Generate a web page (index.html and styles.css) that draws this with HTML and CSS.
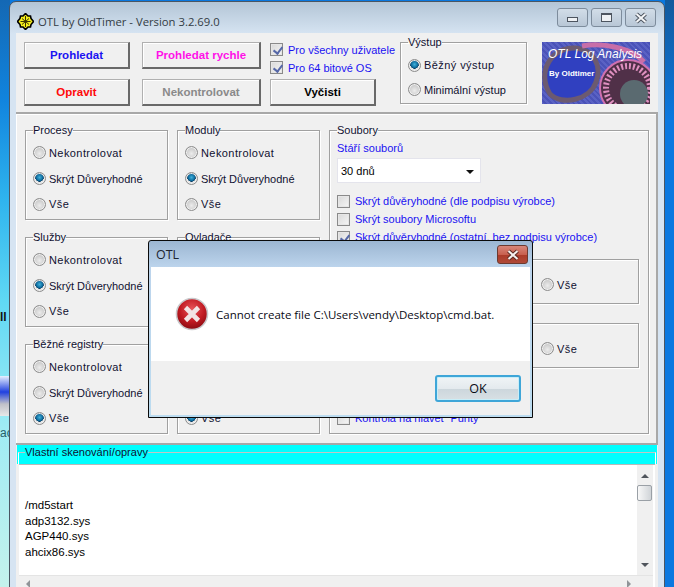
FILE: index.html
```html
<!DOCTYPE html>
<html lang="cs">
<head>
<meta charset="utf-8">
<title>OTL by OldTimer</title>
<link rel="stylesheet" href="styles.css">
</head>
<body>
<div class="desktop">
  <div class="strip-left"></div>
  <div class="strip-right"></div>
  <span class="dt-text dt-text-a">ll</span>
  <div class="dt-icon"></div>
  <span class="dt-text dt-text-b">ac</span>

  <section class="window">
    <header class="titlebar">
      <svg class="app-icon" width="17" height="17" viewBox="0 0 17 17"><path d="M8.5 0.5 L11 3 L13.5 3 L14 5.5 L16.5 8.5 L14 11.5 L13.5 14 L11 14 L8.5 16.5 L6 14 L3.5 14 L3 11.5 L0.5 8.5 L3 5.5 L3.5 3 L6 3 Z" fill="#f4ee1c" stroke="#000" stroke-width="1.6"/><path d="M8.5 3 V14 M3.5 8.5 H13.5 M5 5.5 L12 11.5 M12 5.5 L5 11.5" stroke="#3a3500" stroke-width="1" fill="none"/></svg>
      <span class="title-text">OTL by OldTimer - Version 3.2.69.0</span>
      <div class="caption-btns">
        <span class="cap-btn"><i class="glyph-min"></i></span>
        <span class="cap-btn"><i class="glyph-max"></i></span>
        <span class="cap-btn"><svg width="16" height="12" viewBox="0 0 16 12"><path d="M3.5 2 L12.5 10 M12.5 2 L3.5 10" stroke="#4d5560" stroke-width="4"/><path d="M3.5 2 L12.5 10 M12.5 2 L3.5 10" stroke="#f4f6f8" stroke-width="2"/></svg></span>
      </div>
    </header>

    <div class="client">
      <div class="toolbar">
        <button class="btn btn-narrow c-blue">Prohledat</button>
        <button class="btn btn-wide c-magenta">Prohledat rychle</button>
        <div class="top-checks">
          <label class="check-row"><span class="check on"></span><span class="c-blue">Pro všechny uživatele</span></label>
          <label class="check-row"><span class="check on"></span><span class="c-blue">Pro 64 bitové OS</span></label>
        </div>
        <fieldset class="group output-group">
          <legend>Výstup</legend>
          <div class="radio-row"><span class="radio on"></span><span class="sp-wide">Běžný výstup</span></div>
          <div class="radio-row"><span class="radio"></span>Minimální výstup</div>
        </fieldset>
        <div class="logo">
          <svg width="108" height="62" viewBox="0 0 108 62"><path d="M8 52 C-6 30 10 4 34 6 C52 8 60 24 54 40 C48 58 20 64 8 52 Z" fill="#3040c0" stroke="#6c5a70" stroke-width="5"/><path d="M40 4 C60 0 90 6 102 20" fill="none" stroke="#c86ea8" stroke-width="5"/><circle cx="86" cy="46" r="28" fill="#503048" stroke="#d070b0" stroke-width="2"/><circle cx="86" cy="46" r="22" fill="none" stroke="#e090c0" stroke-width="6" stroke-dasharray="2 2"/><circle cx="92" cy="52" r="14" fill="#5a6a70"/></svg>
          <span class="logo-title">OTL Log Analysis</span>
          <span class="logo-by">By Oldtimer</span>
        </div>
        <button class="btn btn-narrow c-red">Opravit</button>
        <button class="btn btn-wide c-grey">Nekontrolovat</button>
        <button class="btn btn-narrow c-black">Vyčisti</button>
      </div>

      <div class="panel">
        <fieldset class="group">
          <legend>Procesy</legend>
          <div class="radio-row"><span class="radio"></span><span class="sp-wide">Nekontrolovat</span></div>
          <div class="radio-row"><span class="radio on"></span>Skrýt Důveryhodné</div>
          <div class="radio-row"><span class="radio"></span><span class="sp-wide">Vše</span></div>
        </fieldset>
        <fieldset class="group">
          <legend>Moduly</legend>
          <div class="radio-row"><span class="radio"></span><span class="sp-wide">Nekontrolovat</span></div>
          <div class="radio-row"><span class="radio on"></span>Skrýt Důveryhodné</div>
          <div class="radio-row"><span class="radio"></span><span class="sp-wide">Vše</span></div>
        </fieldset>
        <fieldset class="group files">
          <legend>Soubory</legend>
          <div class="age-label c-blue">Stáří souborů</div>
          <div class="select">30 dnů<span class="select-arrow"></span></div>
          <label class="check-row file-check"><span class="check"></span><span class="c-blue">Skrýt důvěryhodné (dle podpisu výrobce)</span></label>
          <label class="check-row file-check"><span class="check"></span><span class="c-blue">Skrýt soubory Microsoftu</span></label>
          <label class="check-row file-check"><span class="check on"></span><span class="c-blue">Skrýt důvěryhodné (ostatní, bez podpisu výrobce)</span></label>
          <div class="sub-box"><div class="radio-row"><span class="radio"></span><span class="sp-wide">Vše</span></div></div>
          <div class="sub-box"><div class="radio-row"><span class="radio"></span><span class="sp-wide">Vše</span></div></div>
          <label class="check-row file-check last-check"><span class="check"></span><span class="c-blue">Kontrola na hlavet `Purity`</span></label>
        </fieldset>
        <fieldset class="group">
          <legend>Služby</legend>
          <div class="radio-row"><span class="radio"></span><span class="sp-wide">Nekontrolovat</span></div>
          <div class="radio-row"><span class="radio on"></span>Skrýt Důveryhodné</div>
          <div class="radio-row"><span class="radio"></span><span class="sp-wide">Vše</span></div>
        </fieldset>
        <fieldset class="group">
          <legend>Ovladače</legend>
          <div class="radio-row"><span class="radio"></span><span class="sp-wide">Nekontrolovat</span></div>
          <div class="radio-row"><span class="radio on"></span>Skrýt Důveryhodné</div>
          <div class="radio-row"><span class="radio"></span><span class="sp-wide">Vše</span></div>
        </fieldset>
        <fieldset class="group">
          <legend>Běžné registry</legend>
          <div class="radio-row"><span class="radio"></span><span class="sp-wide">Nekontrolovat</span></div>
          <div class="radio-row"><span class="radio"></span>Skrýt Důveryhodné</div>
          <div class="radio-row"><span class="radio on"></span><span class="sp-wide">Vše</span></div>
        </fieldset>
        <fieldset class="group">
          <legend>&nbsp;</legend>
          <div class="radio-row"><span class="radio"></span><span class="sp-wide">Nekontrolovat</span></div>
          <div class="radio-row"><span class="radio"></span>Skrýt Důveryhodné</div>
          <div class="radio-row"><span class="radio on"></span><span class="sp-wide">Vše</span></div>
        </fieldset>
      </div>

      <div class="custom">
        <div class="custom-head">
          <div class="custom-rule"><span class="custom-title">Vlastní skenování/opravy</span></div>
        </div>
        <div class="editor">
          <div class="editor-main">
            <div class="editor-text">/md5start<br>adp3132.sys<br>AGP440.sys<br>ahcix86.sys</div>
            <div class="vscroll">
              <span class="arrow-up"></span>
              <span class="thumb"></span>
              <span class="arrow-down"></span>
            </div>
          </div>
          <div class="hscroll"><span class="arrow-left"></span><span class="arrow-right"></span></div>
        </div>
      </div>
    </div>
  </section>

  <section class="dialog">
    <header class="dialog-title">
      <span>OTL</span>
      <span class="dialog-close"><svg width="16" height="12" viewBox="0 0 16 12"><path d="M3.5 2 L12.5 10 M12.5 2 L3.5 10" stroke="#5a2a22" stroke-width="4"/><path d="M3.5 2 L12.5 10 M12.5 2 L3.5 10" stroke="#f6f2f0" stroke-width="2"/></svg></span>
    </header>
    <div class="dialog-body">
      <svg width="34" height="36" viewBox="0 0 34 36"><defs><radialGradient id="errRed" cx="50%" cy="35%" r="65%"><stop offset="0" stop-color="#e8555a"/><stop offset=".6" stop-color="#c11a22"/><stop offset="1" stop-color="#8a0c12"/></radialGradient></defs><circle cx="17" cy="18" r="15.5" fill="url(#errRed)" stroke="#c9c9cc" stroke-width="1.6"/><path d="M10.5 11.5 L23.5 24.5 M23.5 11.5 L10.5 24.5" stroke="#f2e4e4" stroke-width="4.6"/></svg>
      <p>Cannot create file C:\Users\vendy\Desktop\cmd.bat.</p>
    </div>
    <div class="dialog-foot"><button class="ok-btn">OK</button></div>
  </section>
</div>
</body>
</html>
```

FILE: styles.css
```css
* { box-sizing: border-box; }
html, body { margin: 0; padding: 0; }
body { font-family: "Liberation Sans", Arial, sans-serif; font-size: 11px; color: #101030; }

.desktop { position: relative; width: 674px; height: 587px; overflow: hidden; background: #0a78e0; }
.strip-left { position: absolute; left: 0; top: 0; width: 10px; height: 587px;
  background: linear-gradient(180deg, #1468b4 0, #1184de 100px, #2fb4ee 200px, #5fd8f4 300px, #a0ecf4 430px, #c4f2ec 587px); }
.strip-right { position: absolute; right: 0; top: 0; width: 9px; height: 587px; background: linear-gradient(180deg, #145a9c 0, #0a78e0 120px); }
.dt-text { position: absolute; left: 0; color: #111; font-size: 12px; }
.dt-text-a { top: 310px; font-weight: bold; }
.dt-text-b { top: 426px; left: 0; color: #25606a; }
.dt-icon { position: absolute; left: 0; top: 376px; width: 9px; height: 40px;
  background: linear-gradient(180deg, #e8f0ff 0, #2040e0 40%, #c0c0c8 70%, #e8e8e8 100%); }

.window { position: absolute; left: 9px; top: 1px; width: 656px; height: 620px; padding: 0 7px 0 6px;
  border: 1px solid #4a5663; border-radius: 7px 7px 0 0;
  background: linear-gradient(180deg, #b3c5d6 0, #d6e4f2 32px, #d6e4f2 100%); }

.titlebar { display: flex; align-items: center; height: 31px; padding-top: 7px; }
.app-icon { margin: 0 4px 0 1px; }
.title-text { font-family: "Open Sans", sans-serif; font-size: 11.3px; color: #333c44; }
.caption-btns { display: flex; gap: 3px; margin-left: auto; margin-right: 1px; margin-top: -7px; }
.cap-btn { display: flex; align-items: center; justify-content: center; width: 31px; height: 19px;
  border: 1px solid #7d8c9c; border-radius: 3px; background: linear-gradient(180deg, #d2dde8, #b8c7d6); }
.glyph-min { display: block; width: 11px; height: 5px; margin-top: 4px; background: #eef1f4; border: 1px solid #4d5560; }
.glyph-max { display: block; width: 11px; height: 9px; background: #eef1f4; border: 2px solid #4d5560; border-width: 2px 1px 1px; }

.client { background: #f0f0f0; width: 642px; }

.toolbar { display: grid; grid-template-columns: 118px 128px 130px 142px 108px; grid-template-rows: 27px 27px;
  row-gap: 10px; height: 81px; padding: 9px 0 0 8px; border-bottom: 2px solid #a8a8a8; }
.btn { height: 27px; padding: 0; font: bold 11.5px "Liberation Sans", Arial, sans-serif; background: #f0f0f0;
  border: 1px solid #b0b0b0; border-right: 2px solid #696969; border-bottom: 2px solid #696969; box-shadow: inset 1px 1px 0 #fff; }
.btn-narrow { width: 106px; }
.btn-wide { width: 119px; }
.c-blue { color: #1a12f2; }
.c-magenta { color: #ff10e8; }
.c-red { color: #ff0a0a; }
.c-grey { color: #8a8a8a; }
.c-black { color: #000; }
.sp-wide { letter-spacing: .42px; }

.top-checks { display: flex; flex-direction: column; gap: 5px; padding-top: 1px; white-space: nowrap; }
.check-row { display: flex; align-items: center; gap: 5px; height: 14px; white-space: nowrap; }
.check { position: relative; flex: none; width: 13px; height: 13px; border: 1px solid #8a8a8a; background: linear-gradient(135deg, #d8d8d8, #f6f6f6); box-shadow: inset 0 0 0 1px #e6e6e6; }
.check.on::after { content: ""; position: absolute; left: 3.5px; top: 1px; width: 4px; height: 7px;
  border: solid #5668a8; border-width: 0 2px 2px 0; transform: rotate(38deg); }

.group { margin: 0; padding: 3px 0 0 7px; width: 143px; height: 96px; min-width: 0;
  border: 1px solid #a0a0a0; box-shadow: 1px 1px 0 #fff, inset 1px 1px 0 #fff; }
.group legend { padding: 0; margin-left: 0; font-size: 11px; line-height: 13px; color: #101030; white-space: nowrap; }
.radio-row { display: flex; align-items: center; gap: 3px; height: 25.7px; white-space: nowrap; color: #101030; }
.radio { flex: none; width: 13px; height: 13px; border-radius: 50%; border: 1px solid #8c8c8c;
  background: radial-gradient(circle at 50% 60%, #ececec 0, #cfcfcf 55%, #bdbdbd 100%); box-shadow: inset 0 0 0 1px #f0f0f0; }
.radio.on { background: radial-gradient(circle at 50% 40%, #3fb1dc 0, #0d6a9c 38%, #0a3d62 48%, #e8e8e8 52%, #c8c8c8 100%); }

.output-group { width: 127px; height: 68px; margin-top: -6px; grid-row: 1 / span 2; grid-column: 4; padding-left: 7px; padding-top: 4px; }
.output-group .radio-row { height: 24.5px; }
.logo { position: relative; grid-row: 1 / span 2; grid-column: 5; width: 108px; height: 62px; overflow: hidden;
  background: repeating-linear-gradient(45deg, #5a62c4 0 2px, #4a52b8 2px 4px); }
.logo svg { position: absolute; left: 0; top: 0; }
.logo-title { position: absolute; left: 6px; top: 5px; font-size: 12px; font-style: italic; color: #fff; white-space: nowrap; }
.logo-by { position: absolute; left: 7px; top: 27px; font-size: 8px; font-weight: bold; color: #fff; white-space: nowrap; }
.toolbar > .btn:nth-of-type(n+3) { grid-row: 2; }

.panel { display: grid; grid-template-columns: 152px 152px 320px; grid-template-rows: 96px 96px 96px; row-gap: 11px;
  height: 331px; padding: 10px 0 0 9px; border-bottom: 2px solid #a8a8a8; border-right: 2px solid #a8a8a8;
  box-shadow: inset 1px 1px 0 #fff; }
.files { grid-column: 3; grid-row: 1 / span 3; width: 320px; height: 310px; padding-left: 7px; padding-top: 4px; position: relative; }
.age-label { height: 14px; line-height: 14px; }
.select { position: relative; width: 144px; height: 25px; margin: 3px 0 11px; padding: 0 3px; line-height: 25px; background: #fff; border: 1px solid #e4e4ec; color: #000; }
.select-arrow { position: absolute; right: 6px; top: 11px; border: 4px solid transparent; border-top: 4px solid #111; border-bottom: 0; }
.file-check { margin-bottom: 4px; }
.sub-box { width: 302px; height: 45px; margin-top: 15px; padding-left: 203px; padding-top: 12px; border: 1px solid #a0a0a0; box-shadow: 1px 1px 0 #fff, inset 1px 1px 0 #fff; }
.sub-box + .sub-box { margin-top: 19px; }
.last-check { margin-top: 43px; }

.custom { height: 145px; border-left: 1px solid #f0f0f0; border-right: 1px solid #f0f0f0; }
.custom-head { height: 19px; padding: 7px 1px 0; background: #00ffff; }
.custom-rule { height: 12px; border: 1px solid #fff; border-top-color: #c4c4c4; border-bottom: 0; }
.custom-title { display: inline-block; vertical-align: top; margin: -7px 0 0 6px; font-size: 11px; line-height: 13px; color: #101030; background: #00ffff; white-space: nowrap; }
.editor { margin: 0 2px; height: 126px; background: #fff; }
.editor-main { display: flex; height: 111px; border-top: 1px solid #b8b8b8; }
.editor-text { flex: 1; padding: 33px 0 0 6px; font-size: 11.5px; line-height: 15.5px; color: #000; }
.vscroll { position: relative; width: 16px; margin-right: 2px; background: #f0f0f0; }
.arrow-up { position: absolute; left: 4px; top: 9px; border: 4px solid transparent; border-top: 0; border-bottom: 4px solid #50555c; }
.arrow-down { position: absolute; left: 4px; top: 98px; border: 4px solid transparent; border-bottom: 0; border-top: 4px solid #50555c; }
.thumb { position: absolute; left: 0; top: 20px; width: 15px; height: 16px; border: 1px solid #9aa0a6; border-radius: 2px; background: linear-gradient(90deg, #f8f8f8, #d0d4d8); }
.hscroll { position: relative; height: 15px; margin-right: 2px; background: #f0f0f0; border-top: 1px solid #e4e4e4; }
.arrow-left { position: absolute; left: 7px; top: 4px; border: 4px solid transparent; border-left: 0; border-right: 4px solid #909498; }
.arrow-right { position: absolute; right: 22px; top: 4px; border: 4px solid transparent; border-right: 0; border-left: 4px solid #909498; }

.dialog { position: absolute; left: 148px; top: 240px; width: 385px; height: 178px; display: flex; flex-direction: column;
  padding: 0 2px 2px; border: 1px solid #0a0a0a; border-radius: 3px 3px 0 0; background: linear-gradient(180deg, #9cb6d2 0, #bcd4ec 26px, #bcdcf0 100%); }
.dialog-title { position: relative; display: flex; align-items: center; height: 26px; padding-left: 5px; font: 12.5px "Open Sans", sans-serif; color: #1c2430; }
.dialog-close { position: absolute; right: 2px; top: 4px; display: flex; align-items: center; justify-content: center; width: 31px; height: 19px; border: 1px solid #6c3a30; border-radius: 3px; background: linear-gradient(180deg, #d8877a 0, #c8604f 50%, #ac3a28 52%, #b04a38 100%); }
.dialog-body { display: flex; align-items: center; gap: 7px; height: 94px; padding: 0 0 0 24px; background: #fff; }
.dialog-body p { margin: 0; font: 11.5px "Open Sans", sans-serif; color: #0a0a14; white-space: nowrap; }
.dialog-foot { flex: 1; display: flex; justify-content: flex-end; align-items: flex-start; padding: 14px 9px 0 0; background: #f0f0f0; }
.ok-btn { width: 86px; height: 27px; padding: 0; font: 12.5px "Open Sans", sans-serif; color: #0a0a14; border: 2px solid #3fa6d8; border-radius: 3px; background: linear-gradient(180deg, #f0f4f6 0, #e4eaee 50%, #ccd6dc 52%, #d8e0e4 100%); box-shadow: inset 0 0 0 1px #c8eef8; }
```
